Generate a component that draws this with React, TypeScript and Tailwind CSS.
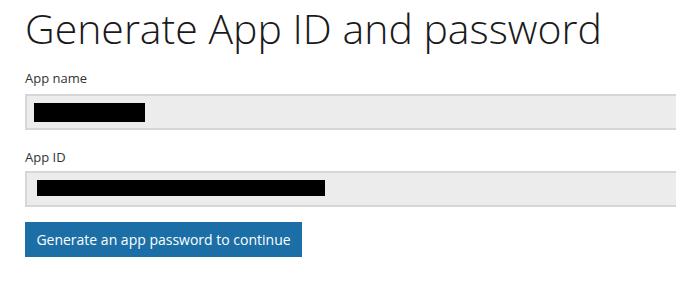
export default function App() {
  return (
    <div
      className="w-[676px] h-[281px] overflow-hidden bg-white pl-[25px] text-[#333]"
      style={{ fontFamily: '"Open Sans", "Liberation Sans", sans-serif' }}
    >
      <h1 className="pt-[8px] text-[41px] leading-[40px] font-light text-[#1a1a1a]">
        Generate App ID and password
      </h1>

      <div className="mt-[22px]">
        <label className="block text-[13px] leading-[16px] text-[#333]">App name</label>
        <div className="mt-[8px] h-[36px] w-[700px] border-2 border-[#d6d6d6] bg-[#ececec] pl-[7px] pt-[7px]">
          <div className="h-[19px] w-[111px] bg-black" />
        </div>
      </div>

      <div className="mt-[19px]">
        <label className="block text-[13px] leading-[16px] text-[#333]">App ID</label>
        <div className="mt-[6px] h-[36px] w-[700px] border-2 border-[#d6d6d6] bg-[#ececec] pl-[10px] pt-[7px]">
          <div className="h-[16px] w-[288px] bg-black" />
        </div>
      </div>

      <button className="mt-[15px] h-[35px] w-[277px] bg-[#1c6fa6] text-[14px] text-white">
        Generate an app password to continue
      </button>
    </div>
  );
}
